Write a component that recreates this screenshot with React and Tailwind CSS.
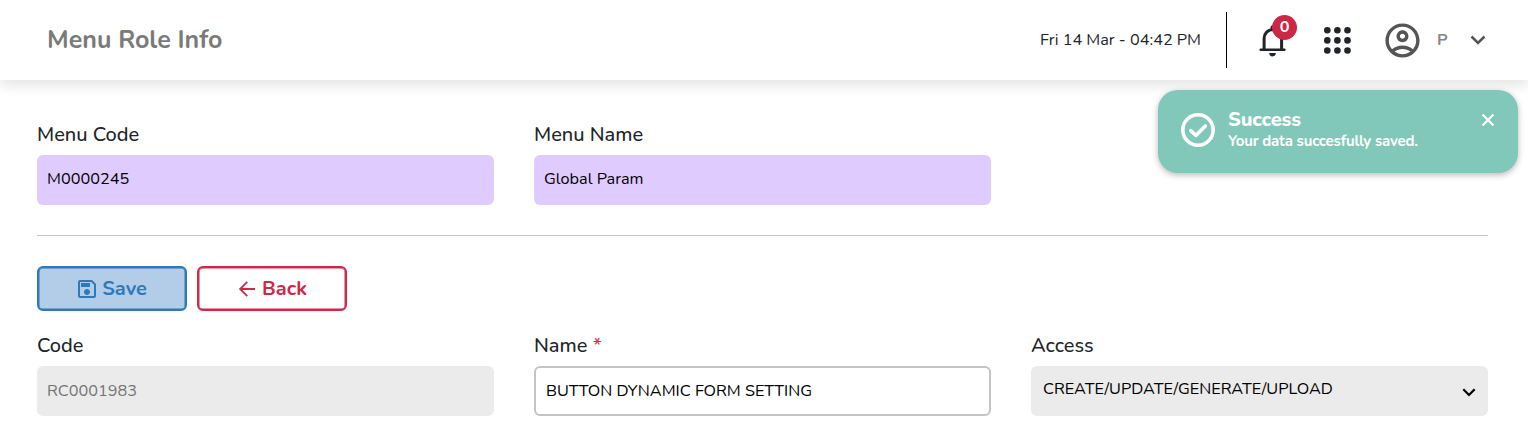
import { MdOutlineAccountCircle, MdOutlineSave } from "react-icons/md";

function BellIcon() {
  return (
    <svg width="28" height="34" viewBox="0 0 28 34" fill="none" className="block">
      <path
        d="M5.1 27V15.5A8.9 8.9 0 0 1 14 6.4A8.9 8.9 0 0 1 22.6 15.5V27"
        stroke="#212529"
        strokeWidth="3"
      />
      <circle cx="14" cy="4.6" r="2.4" fill="#212529" />
      <path d="M1.7 26.7H25.4" stroke="#212529" strokeWidth="2.5" strokeLinecap="round" />
      <path d="M10.2 30.1H16.8A3.3 3.3 0 0 1 10.2 30.1Z" fill="#212529" />
    </svg>
  );
}

function AppsIcon() {
  const steps = [3.3, 13.4, 23.5];
  return (
    <svg width="27" height="27" viewBox="0 0 27 27" className="block" fill="#212529">
      {steps.map((y) => steps.map((x) => <circle key={`${x}-${y}`} cx={x} cy={y} r="3.3" />))}
    </svg>
  );
}

function Label({ children }) {
  return (
    <div className="h-[30px] text-[20px] leading-[30px] font-medium whitespace-nowrap text-[#212529]">
      {children}
    </div>
  );
}

function Header() {
  return (
    <header className="flex h-20 items-center justify-between bg-white pr-[42px] pl-[47px] shadow-[0_6px_12px_rgba(0,0,0,0.1)]">
      <h1 className="text-[25px] leading-9 font-bold text-[#7a7a7a]">Menu Role Info</h1>
      <div className="flex items-center">
        <span className="text-[16.25px] leading-6 text-[#212529]">Fri 14 Mar - 04:42 PM</span>
        <div className="ml-[25px] h-14 w-px bg-black" />
        <div className="relative ml-[32px]">
          <BellIcon />
          <span className="absolute -top-[8px] left-[13px] flex size-[25px] items-center justify-center rounded-full bg-[#cc2745] text-[16.25px] leading-none font-bold text-white">
            0
          </span>
        </div>
        <div className="ml-[37px]">
          <AppsIcon />
        </div>
        <MdOutlineAccountCircle className="ml-[31px] size-[41px] text-[#555555]" />
        <span className="ml-[14px] w-[12px] text-[16.25px] leading-6 font-bold text-[#888888]">P</span>
        <svg width="16" height="10" viewBox="0 0 16 10" fill="none" className="ml-[21px]">
          <path d="M1.500 1.500L8 8L14.500 1.500" stroke="#555555" strokeWidth="2.500" />
        </svg>
      </div>
    </header>
  );
}

function Toast() {
  return (
    <div className="absolute top-[90px] right-[10px] flex h-[83px] w-[360px] rounded-[20px] bg-[#81c8ba] pl-[22px] text-white shadow-[0_2px_6px_rgba(0,0,0,0.28)]">
      <svg width="36" height="36" viewBox="0 0 36 36" fill="none" className="mt-[22px]">
        <circle cx="18" cy="18" r="15.2" stroke="white" strokeWidth="3.600" />
        <path d="M10.800 18.600L15.900 23.400L25.300 13.900" stroke="white" strokeWidth="3.600" strokeLinecap="round" strokeLinejoin="round" />
      </svg>
      <div className="ml-3 pt-[18px] whitespace-nowrap">
        <div className="text-[20px] leading-6 font-extrabold tracking-[-0.15px]">Success</div>
        <div className="-mt-px text-[15px] leading-5 font-bold tracking-[-0.2px]">Your data succesfully saved.</div>
      </div>
      <svg width="14" height="14" viewBox="0 0 14 14" className="mt-[23px] mr-[23px] ml-auto">
        <path d="M1.500 1.500L12.500 12.500M12.500 1.500L1.500 12.500" stroke="white" strokeWidth="2" />
      </svg>
    </div>
  );
}

export default function App() {
  return (
    <div className="relative h-[436px] overflow-hidden bg-white font-['Nunito','Lato',sans-serif]">
      <Header />
      <main className="pt-10 pr-10 pl-[37px]">
        <div className="grid grid-cols-3 gap-10">
          <div>
            <Label>Menu Code</Label>
            <div className="mt-[5px] h-[50px] rounded-md bg-[#e0cbff] px-[10px] text-[16.25px] leading-[48px] text-black">
              <span>M0000245</span>
            </div>
          </div>
          <div>
            <Label>Menu Name</Label>
            <div className="mt-[5px] h-[50px] rounded-md bg-[#e0cbff] px-[10px] text-[16.25px] leading-[48px] text-black">
              <span>Global Param</span>
            </div>
          </div>
        </div>
        <div className="mt-[30px] h-px bg-[#c4c4c4]" />
        <div className="mt-[30px] flex gap-[10px]">
          <button className="flex h-[45px] w-[150px] items-center justify-center gap-[3px] rounded-md border-2 border-[#2f79b9] bg-[#b3cce8] pr-[2px] text-[20px] font-bold text-[#2f79b9] shadow-[inset_0_0_0_0.5px_#2f79b9]">
            <MdOutlineSave className="size-6" />
            <span>Save</span>
          </button>
          <button className="flex h-[45px] w-[150px] items-center justify-center gap-[3px] rounded-md border-2 border-[#cf2848] bg-white pr-[2px] text-[20px] font-bold text-[#cf2848] shadow-[inset_0_0_0_0.5px_#cf2848]">
            <svg width="24" height="24" viewBox="0 0 24 24" fill="none">
              <path d="M20 12H5.200M12.300 4.800L5.100 12L12.300 19.200" stroke="#cf2848" strokeWidth="1.800" />
            </svg>
            <span>Back</span>
          </button>
        </div>
        <div className="mt-[20px] grid grid-cols-3 gap-10">
          <div>
            <Label>Code</Label>
            <div className="mt-[5px] h-[50px] rounded-md bg-[#ebebeb] px-[10px] text-[16.25px] leading-[50px] text-[#747474]">
              <span>RC0001983</span>
            </div>
          </div>
          <div>
            <Label>
              <span>Name</span> <span className="font-semibold text-[#dc2f4c]">*</span>
            </Label>
            <div className="mt-[5px] h-[50px] rounded-md border-2 border-[#c4c4c4] px-[10px] text-[16.25px] leading-[46px] text-black">
              <span>BUTTON DYNAMIC FORM SETTING</span>
            </div>
          </div>
          <div>
            <Label>Access</Label>
            <div className="mt-[5px] flex h-[50px] justify-between rounded-md bg-[#ebebeb] pr-[12.5px] pl-3 text-[16.25px] leading-[46px] text-black">
              <span>CREATE/UPDATE/GENERATE/UPLOAD</span>
              <svg width="14" height="9" viewBox="0 0 14 9" fill="none" className="mt-[21.500px]">
                <path d="M1.300 1.300L7 7L12.700 1.300" stroke="black" strokeWidth="2.200" />
              </svg>
            </div>
          </div>
        </div>
      </main>
      <Toast />
    </div>
  );
}
